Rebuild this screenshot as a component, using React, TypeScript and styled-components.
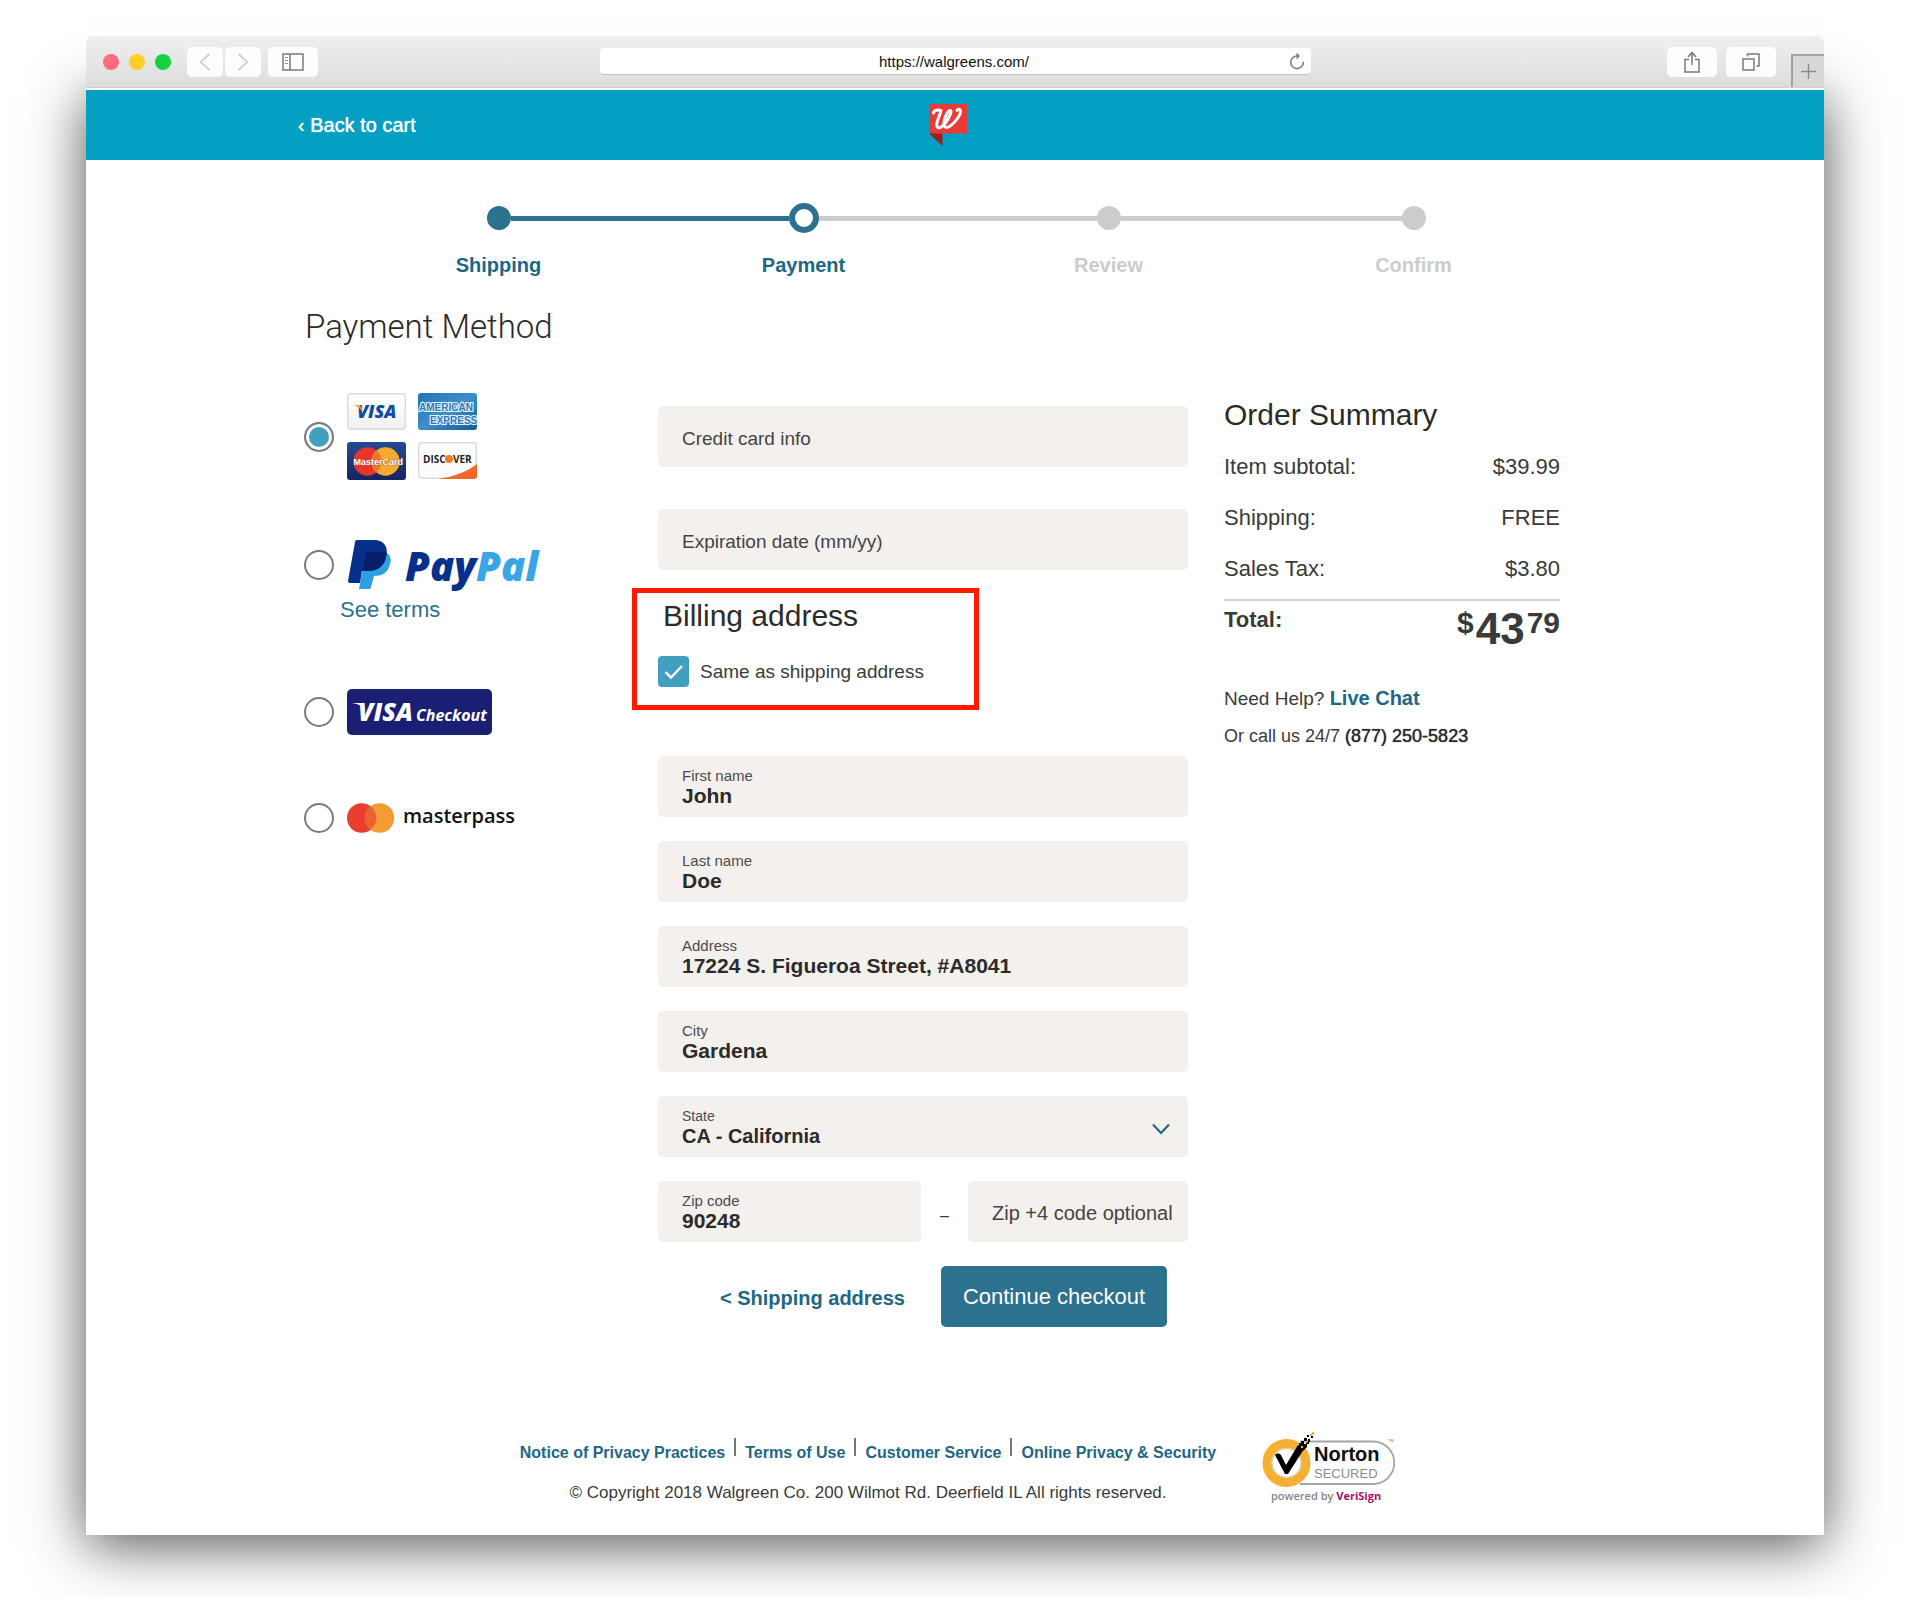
import React from "react";
import styled, { createGlobalStyle } from "styled-components";

const sans = '"Liberation Sans", Arial, Helvetica, sans-serif';
const color = {
  header: "#03a0c3",
  teal: "#2c728e",
  link: "#1d6786",
  accent: "#429fbf",
  ink: "#3a3a3a",
  dark: "#2b2b2b",
  field: "#f4f0ee",
  muted: "#cccccc",
  mark: "#ff1a00",
};

const GlobalStyle = createGlobalStyle`
  *, *::before, *::after { box-sizing: border-box; }
  body { margin: 0; background: #fff; color: ${color.ink}; font-family: ${sans}; }
  h1, h2, p, ul, ol, dl, dd, fieldset { margin: 0; padding: 0; border: 0; }
  ul, ol { list-style: none; }
  a { color: ${color.link}; text-decoration: none; }
  button, input, select { font-family: inherit; }
  svg { display: block; flex: none; overflow: visible; }
`;

const Desktop = styled.div`
  padding: 36px 96px 63px 86px;
  overflow: hidden;
`;

const Toolbar = styled.div`
  position: relative;
  z-index: 1;
  display: flex;
  align-items: center;
  height: 52px;
  border-radius: 6px 6px 0 0;
  border-bottom: 1px solid #cfcfcf;
  background: linear-gradient(#efefef, #dddddd);
`;

const ToolSide = styled.div<{ $end?: boolean }>`
  flex: 1 1 0;
  display: flex;
  align-items: center;
  align-self: stretch;
  justify-content: ${(p) => (p.$end ? "flex-end" : "flex-start")};
  gap: 7px;
  padding-left: 17px;
`;

const Lights = styled.div`
  display: flex;
  gap: 10px;
  margin-right: 9px;
`;

const Light = styled.span<{ $tone: string }>`
  width: 16px;
  height: 16px;
  border-radius: 50%;
  background: ${(p) => p.$tone};
`;

const ToolButton = styled.button<{ $wide?: boolean }>`
  display: flex;
  align-items: center;
  justify-content: center;
  width: ${(p) => (p.$wide ? 50 : 36)}px;
  height: 30px;
  padding: 0;
  border: 0;
  border-radius: 5px;
  background: #fdfdfd;
`;

const ToolGroup = styled.div<{ $gap: number }>`
  display: flex;
  gap: ${(p) => p.$gap}px;
`;

const AddressBar = styled.div`
  flex: 0 1 711px;
  display: flex;
  align-items: center;
  height: 27px;
  padding-right: 6px;
  border-radius: 4px;
  border-bottom: 1px solid #c4c4c4;
  background: #fff;
`;

const AddressInput = styled.input`
  flex: 1;
  min-width: 0;
  padding: 2px 0 0 20px;
  border: 0;
  background: none;
  color: #111;
  font-size: 15px;
  line-height: 24px;
  text-align: center;
`;

const BareButton = styled.button`
  padding: 0;
  border: 0;
  background: none;
`;

const NewTab = styled.button`
  align-self: flex-end;
  display: flex;
  align-items: center;
  justify-content: center;
  width: 33px;
  height: 33px;
  margin-left: 8px;
  padding: 0;
  border: solid #a2a2a2;
  border-width: 2px 0 0 2px;
  background: #d8d8d8;
`;

const Page = styled.div`
  padding-top: 2px;
  background: #fff;
  box-shadow: 0 10px 54px rgba(0, 0, 0, 0.68);
`;

const Header = styled.header`
  display: grid;
  grid-template-columns: 1fr auto 1fr;
  align-items: center;
  height: 70px;
  padding: 0 227px 0 212px;
  background: ${color.header};
`;

const BackLink = styled.a`
  color: #fff;
  font-size: 20px;
  line-height: 24px;
  text-shadow: 0 0 1px #fff;
`;

const Steps = styled.ol`
  display: grid;
  grid-template-columns: repeat(4, 1fr);
  max-width: 1222px;
  margin: 0 auto;
  padding: 43px 0 0 2px;
`;

type StepState = "done" | "current" | "todo";

const Step = styled.li<{ $state: StepState }>`
  display: grid;
  justify-items: center;
  gap: 20px;
  color: ${(p) => (p.$state === "todo" ? color.muted : color.link)};
  font-size: 20px;
  font-weight: 700;
  line-height: 24px;
`;

const Track = styled.div`
  display: flex;
  align-items: center;
  width: 100%;
  height: 30px;
`;

const Rail = styled.span<{ $tone: string }>`
  flex: 1;
  height: 5px;
  background: ${(p) => p.$tone};
`;

const Dot = styled.span<{ $state: StepState }>`
  width: ${(p) => (p.$state === "current" ? 30 : 24)}px;
  height: ${(p) => (p.$state === "current" ? 30 : 24)}px;
  border: ${(p) => (p.$state === "current" ? 6 : 0)}px solid ${color.teal};
  border-radius: 50%;
  background: ${(p) =>
    p.$state === "current" ? "#fff" : p.$state === "done" ? color.teal : color.muted};
`;

const Main = styled.main`
  padding: 0 264px 0 219px;
`;

const Title = styled.h1`
  margin-top: 30px;
  color: ${color.dark};
  font-family: Roboto, ${sans};
  font-size: 33px;
  font-weight: 300;
  line-height: 40px;
`;

const Columns = styled.div`
  display: grid;
  grid-template-columns: 353px minmax(400px, 1fr) 372px;
  align-items: start;
`;

const Methods = styled.fieldset`
  display: grid;
  gap: 60px;
  padding-top: 46px;
`;

const Method = styled.label`
  display: flex;
  align-items: center;
  gap: 14px;
  min-height: 46px;
`;

const Radio = styled.input`
  appearance: none;
  flex: none;
  width: 30px;
  height: 30px;
  margin: 0 -1px;
  border: 2px solid #7b7b7b;
  border-radius: 50%;
  background: #fff;
  &:checked {
    background: ${color.accent};
    box-shadow: inset 0 0 0 3px #fff;
  }
`;

const CardGrid = styled.span`
  display: grid;
  grid-template-columns: 59px 59px;
  gap: 12px;
`;

const TermsLink = styled.a`
  display: block;
  margin-left: 35px;
  padding-top: 2px;
  color: ${color.teal};
  font-size: 22px;
  line-height: 38px;
`;

const Form = styled.form`
  display: grid;
  padding-top: 59px;
`;

const CardFields = styled.div`
  display: grid;
  gap: 42px;
`;

const AddressFields = styled.div`
  display: grid;
  gap: 24px;
  margin-top: 46px;
`;

const PlainInput = styled.input<{ $size?: number }>`
  width: 100%;
  min-width: 0;
  height: 61px;
  padding: 4px 0 0 24px;
  border: 0;
  border-radius: 5px;
  background: ${color.field};
  color: ${color.ink};
  font-size: ${(p) => p.$size ?? 19}px;
  &::placeholder { color: #444; opacity: 1; }
`;

const Field = styled.label`
  display: grid;
  grid-template-columns: 1fr auto;
  grid-template-rows: 18px 22px;
  height: 61px;
  padding: 11px 18px 0 24px;
  border-radius: 5px;
  background: ${color.field};
`;

const FieldName = styled.span<{ $small?: boolean }>`
  color: #4c4c4c;
  font-size: ${(p) => (p.$small ? 14 : 15)}px;
  line-height: 18px;
`;

const FieldInput = styled.input`
  grid-column: 1;
  min-width: 0;
  height: 22px;
  padding: 0;
  border: 0;
  background: none;
  color: ${color.dark};
  font-size: 21px;
  font-weight: 700;
  line-height: 22px;
`;

const FieldSelect = styled(FieldInput).attrs({ as: "select" })`
  appearance: none;
  font-size: 20px;
`;

const Chevron = styled.svg`
  grid-area: 1 / 2 / 3 / 3;
  align-self: center;
  margin-top: 4px;
  pointer-events: none;
`;

const Billing = styled.section`
  width: 347px;
  margin: 18px 0 0 -26px;
  padding: 5px 0 18px 21px;
  border: 5px solid ${color.mark};
`;

const SectionTitle = styled.h2`
  color: ${color.dark};
  font-size: 30px;
  font-weight: 400;
  line-height: 36px;
`;

const BillingTitle = styled(SectionTitle)`
  padding-left: 5px;
`;

const CheckRow = styled.label`
  display: grid;
  grid-template-columns: 31px 1fr;
  align-items: center;
  column-gap: 11px;
  margin-top: 22px;
  font-size: 19px;
  line-height: 31px;
`;

const Checkbox = styled.input`
  appearance: none;
  grid-area: 1 / 1;
  width: 31px;
  height: 31px;
  margin: 0;
  border-radius: 4px;
  background: ${color.accent};
`;

const Tick = styled.svg`
  grid-area: 1 / 1;
  z-index: 1;
  justify-self: center;
  pointer-events: none;
`;

const ZipRow = styled.div`
  display: grid;
  grid-template-columns: 263px 1fr 220px;
`;

const ZipDash = styled.span`
  padding-top: 8px;
  line-height: 53px;
  text-align: center;
`;

const Actions = styled.div`
  display: flex;
  align-items: center;
  justify-content: flex-end;
  gap: 36px;
  padding-right: 21px;
  font-size: 20px;
  font-weight: 700;
  a { padding-top: 4px; }
`;

const Continue = styled.button`
  width: 226px;
  height: 61px;
  padding: 0;
  border: 0;
  border-radius: 5px;
  background: ${color.teal};
  color: #fff;
  font-size: 22px;
`;

const Summary = styled.aside`
  min-width: 0;
  padding: 50px 0 0 36px;
`;

const Lines = styled.dl`
  margin-top: 8px;
  padding-bottom: 5px;
  border-bottom: 2px solid #d2d2d2;
`;

const Line = styled.div`
  display: flex;
  justify-content: space-between;
  font-size: 22px;
  line-height: 51px;
`;

const Total = styled.div`
  display: flex;
  justify-content: space-between;
  align-items: flex-start;
  padding-top: 4px;
  font-size: 22px;
  font-weight: 700;
  line-height: 30px;
`;

const Price = styled.span`
  display: flex;
  gap: 2px;
  padding-top: 2px;
`;

const PricePart = styled.span<{ $big?: boolean }>`
  font-size: ${(p) => (p.$big ? 44 : 30)}px;
  line-height: ${(p) => (p.$big ? 44 : 32)}px;
`;

const Help = styled.p`
  margin-top: 35px;
  font-size: 19px;
  line-height: 24px;
  a { font-size: 20px; font-weight: 700; }
`;

const Call = styled.p`
  margin-top: 13px;
  font-size: 18px;
  line-height: 24px;
  a { color: ${color.dark}; text-shadow: 0 0 1px #2b2b2b; }
`;

const Footer = styled.footer`
  display: flex;
  justify-content: center;
  align-items: flex-start;
  gap: 46px;
  padding: 105px 0 30px 6px;
`;

const Legal = styled.div`
  padding-top: 6px;
  text-align: center;
`;

const LegalLinks = styled.ul`
  display: flex;
  font-size: 16px;
  font-weight: 700;
  line-height: 26px;
`;

const LegalItem = styled.li`
  display: flex;
  a { padding-top: 2px; }
  & + &::before {
    content: "";
    width: 2px;
    height: 18px;
    margin: 0 9px;
    background: #777;
  }
`;

const Copyright = styled.p`
  margin-top: 15px;
  font-size: 17px;
  line-height: 24px;
`;

const svgSans = { fontFamily: '"Open Sans", "Liberation Sans", sans-serif' };

const VisaCard = () => (
  <svg width="59" height="37" viewBox="0 0 59 37" role="img" aria-label="Visa">
    <defs>
      <linearGradient id="visaBg" x1="0" y1="0" x2="0" y2="1">
        <stop offset="0" stopColor="#fff" />
        <stop offset="1" stopColor="#f0f0f0" />
      </linearGradient>
    </defs>
    <rect x="0.7" y="0.7" width="57.6" height="35.6" rx="3" fill="url(#visaBg)" stroke="#dadada" strokeWidth="1.4" />
    <text x="10" y="25" fontSize="18" fontWeight="800" fontStyle="italic" fill="#0b4ea2" {...svgSans}>VISA</text>
    <path d="M7 12H13L16 20C14 16 11 14 7 12Z" fill="#f5a81c" />
  </svg>
);

const AmexCard = () => (
  <svg width="59" height="37" viewBox="0 0 59 37" role="img" aria-label="American Express">
    <defs>
      <linearGradient id="amexBg" x1="0" y1="0" x2="1" y2="1">
        <stop offset="0" stopColor="#2472b4" />
        <stop offset="0.5" stopColor="#3f8fca" />
        <stop offset="1" stopColor="#135a9f" />
      </linearGradient>
      <clipPath id="amexClip"><rect width="59" height="37" rx="3" /></clipPath>
    </defs>
    <g clipPath="url(#amexClip)">
      <rect width="59" height="37" fill="url(#amexBg)" />
      <g fill="#2a78b8" stroke="#e4f3fc" strokeWidth="2.2" paintOrder="stroke" fontSize="10" fontWeight="700" fontFamily='"Liberation Sans", sans-serif'>
        <text x="1" y="18">AMERICAN</text>
        <text x="12" y="31">EXPRESS</text>
      </g>
    </g>
  </svg>
);

const MasterCard = () => (
  <svg width="59" height="38" viewBox="0 0 59 38" role="img" aria-label="MasterCard">
    <defs>
      <linearGradient id="mcBg" x1="0" y1="0" x2="0" y2="1">
        <stop offset="0" stopColor="#244a94" />
        <stop offset="1" stopColor="#16245f" />
      </linearGradient>
    </defs>
    <rect width="59" height="38" rx="3" fill="url(#mcBg)" />
    <circle cx="20.5" cy="19.5" r="14.2" fill="#e8352c" />
    <circle cx="38.5" cy="19.5" r="14.2" fill="#f6ab2f" />
    <path d="M29.5 8.5A14.2 14.2 0 0 1 29.5 30.5A14.2 14.2 0 0 1 29.5 8.5Z" fill="#f0742c" />
    <text x="6.5" y="23" fontSize="9" fontWeight="700" fill="#fff" stroke="#9a4a3a" strokeWidth="0.7" paintOrder="stroke" fontFamily='"Liberation Sans", sans-serif'>MasterCard</text>
  </svg>
);

const DiscoverCard = () => (
  <svg width="59" height="37" viewBox="0 0 59 37" role="img" aria-label="Discover">
    <defs><clipPath id="discClip"><rect width="59" height="37" rx="3" /></clipPath></defs>
    <g clipPath="url(#discClip)">
      <rect x="0.7" y="0.7" width="57.6" height="35.6" rx="3" fill="#fcfcfc" stroke="#dadada" strokeWidth="1.4" />
      <path d="M59 22C49 30 34 35 20 37H59Z" fill="#f2682a" />
    </g>
    <g fontSize="10" fontWeight="700" fill="#1e1e1e" {...svgSans}>
      <text x="5" y="20.5">DISC</text>
      <text x="35" y="20.5">VER</text>
    </g>
    <circle cx="31" cy="17" r="4" fill="#f47b2a" />
  </svg>
);

const PayPalLogo = () => (
  <svg width="200" height="49" viewBox="0 0 200 49" role="img" aria-label="PayPal">
    <defs>
      <clipPath id="ppFront">
        <path d="M9 0H26C36 0 41 7 38 17C36 27 29 31 19 31H14L12 43H2Q0 43 0 41L7 2Q7 0 9 0Z" />
      </clipPath>
    </defs>
    <g transform="translate(1 0)">
      <path d="M18 12H37C42 14 44 19 42 24C40 33 34 36 26 36L23 47Q23 49 21 49H11Z" fill="#2f9fe3" />
      <path d="M9 0H26C36 0 41 7 38 17C36 27 29 31 19 31H14L12 43H2Q0 43 0 41L7 2Q7 0 9 0Z" fill="#06308c" />
      <path clipPath="url(#ppFront)" d="M18 12H37C42 14 44 19 42 24C40 33 34 36 26 36H14Z" fill="#061f6b" />
    </g>
    <text x="58" y="41" fontSize="40" fontWeight="800" fontStyle="italic" fill="#06308c" {...svgSans}>
      Pay<tspan fill="#3aa5e6">Pal</tspan>
    </text>
  </svg>
);

const VisaCheckout = () => (
  <svg width="145" height="46" viewBox="0 0 145 46" role="img" aria-label="Visa Checkout">
    <rect width="145" height="46" rx="5" fill="#1b1f74" />
    <g fill="#fff" fontStyle="italic" {...svgSans}>
      <text x="11" y="32" fontSize="25" fontWeight="800">VISA</text>
      <text x="69" y="32" fontSize="16" fontWeight="700">Checkout</text>
    </g>
    <path d="M5 14H15L19 22C16 17 12 15 5 14Z" fill="#fff" />
  </svg>
);

const Masterpass = () => (
  <svg width="175" height="30" viewBox="0 0 175 30" role="img" aria-label="Masterpass">
    <circle cx="14.7" cy="15" r="14.7" fill="#e93e30" />
    <circle cx="32.5" cy="15" r="14.7" fill="#f39c32" />
    <path d="M23.6 3.3A14.7 14.7 0 0 1 23.6 26.7A14.7 14.7 0 0 1 23.6 3.3Z" fill="#ea6232" />
    <text x="56" y="20" fontSize="20" fontWeight="600" fill="#111" {...svgSans}>masterpass</text>
  </svg>
);

const WalgreensLogo = () => (
  <svg width="38" height="42" viewBox="0 0 38 42" role="img" aria-label="Walgreens">
    <rect width="38" height="29.5" fill="#ea3a36" />
    <path d="M0 29.5H13.5V42Z" fill="#9c1f1a" />
    <path
      d="M4.5 9C5 6 9 5.500 12 6.500C11 12 6.500 18 8 22.500C9.500 26 15 22 18.500 16C21 11 23 7.500 21.500 6.500C19 6 15.500 13 15 18.500C14.800 23 17 24.500 20.500 22.500C26 19 31.500 11 31.500 7.500C31.500 5 29 4.500 28 6.500"
      fill="none" stroke="#fff" strokeWidth="3" strokeLinecap="round" strokeLinejoin="round"
    />
  </svg>
);

const NortonSeal = () => (
  <svg width="134" height="72" viewBox="0 0 134 72" role="img" aria-label="Norton Secured, powered by VeriSign">
    <path d="M38 9.500H111A21 21 0 0 1 111 52H38" fill="#fff" stroke="#a4a4a4" strokeWidth="1.800" />
    <circle cx="24.500" cy="31" r="19.500" fill="#fff" stroke="#f6b031" strokeWidth="9" />
    <circle cx="24.500" cy="31" r="14.500" fill="none" stroke="#bdb6a8" strokeWidth="0.800" />
    <path d="M13 23C15 21 18 21 19.500 24L24 33L36 13L42 17L26 42H23Z" fill="#000" />
    <path d="M35 14H37V11H39V9H42V12H45V15L43 17L41 19Z" fill="#000" />
    <g fill="#000">
      <rect x="42" y="6" width="3" height="3" /><rect x="46" y="7" width="2" height="3" />
      <rect x="45" y="3" width="2" height="2" /><rect x="49" y="4" width="2" height="2" />
      <rect x="44" y="10" width="3" height="2" />
    </g>
    <g fill="#f6b031">
      <rect x="39" y="14" width="2" height="2" /><rect x="43" y="9" width="2" height="2" />
      <rect x="48" y="2" width="2" height="2" /><rect x="50" y="0" width="2" height="3" />
    </g>
    <g fontFamily='"Liberation Sans", sans-serif'>
      <text x="52" y="29" fontSize="20" fontWeight="700" fill="#111">Norton</text>
      <text x="52" y="46" fontSize="13" fill="#8c8c8c">SECURED</text>
    </g>
    <g {...svgSans}>
      <text x="9" y="68" fontSize="11" fontWeight="600" fill="#858585">powered by <tspan fill="#a3116a" fontWeight="700">VeriSign</tspan></text>
      <text x="126" y="10" fontSize="4" fill="#777">TM</text>
    </g>
  </svg>
);

const steps: { name: string; state: StepState; before: string; after: string }[] = [
  { name: "Shipping", state: "done", before: "transparent", after: color.teal },
  { name: "Payment", state: "current", before: color.teal, after: color.muted },
  { name: "Review", state: "todo", before: color.muted, after: color.muted },
  { name: "Confirm", state: "todo", before: color.muted, after: "transparent" },
];

const addressFields = [
  ["First name", "John"],
  ["Last name", "Doe"],
  ["Address", "17224 S. Figueroa Street, #A8041"],
  ["City", "Gardena"],
];

const charges = [
  ["Item subtotal:", "$39.99"],
  ["Shipping:", "FREE"],
  ["Sales Tax:", "$3.80"],
];

const legal = ["Notice of Privacy Practices", "Terms of Use", "Customer Service", "Online Privacy & Security"];

const BrowserToolbar = () => (
  <Toolbar>
    <ToolSide>
      <Lights>
        <Light $tone="#ff6b81" />
        <Light $tone="#ffcf25" />
        <Light $tone="#0fd33f" />
      </Lights>
      <ToolGroup $gap={2}>
        <ToolButton type="button" aria-label="Back">
          <svg width="12" height="20" viewBox="0 0 12 20" fill="none" stroke="#d0d0d0" strokeWidth="1.800"><path d="M10.500 2L1.500 10L10.500 18" /></svg>
        </ToolButton>
        <ToolButton type="button" aria-label="Forward">
          <svg width="12" height="20" viewBox="0 0 12 20" fill="none" stroke="#d0d0d0" strokeWidth="1.800"><path d="M1.500 2L10.500 10L1.500 18" /></svg>
        </ToolButton>
      </ToolGroup>
      <ToolButton type="button" $wide aria-label="Sidebar">
        <svg width="22" height="18" viewBox="0 0 22 18" fill="none" stroke="#7a7a7a" strokeWidth="1.500">
          <path d="M1 1H21V17H1ZM8 1V17" />
          <path d="M3 4.500H6M3 7.500H6M3 10.500H6" strokeWidth="1.200" strokeDasharray="1.500 0.600" />
        </svg>
      </ToolButton>
    </ToolSide>
    <AddressBar>
      <AddressInput type="text" aria-label="Address" defaultValue="https://walgreens.com/" />
      <BareButton type="button" aria-label="Reload">
        <svg width="16" height="18" viewBox="0 0 16 18" fill="none" stroke="#808080" strokeWidth="1.600">
          <path d="M8.500 4A6.300 6.300 0 1 0 14.300 9.800" />
          <path d="M7.500 0.500L11 4L7.500 7.500Z" fill="#808080" stroke="none" />
        </svg>
      </BareButton>
    </AddressBar>
    <ToolSide $end>
      <ToolGroup $gap={9}>
        <ToolButton type="button" $wide aria-label="Share">
          <svg width="18" height="22" viewBox="0 0 18 22" fill="none" stroke="#7a7a7a" strokeWidth="1.500">
            <path d="M6 8.500H2V21H16V8.500H12M9 14V1.500M5 6L9 1.500L13 6" />
          </svg>
        </ToolButton>
        <ToolButton type="button" $wide aria-label="Tabs">
          <svg width="18" height="18" viewBox="0 0 18 18" fill="none" stroke="#7a7a7a" strokeWidth="1.500">
            <path d="M1 6H12V17H1ZM5.500 3.500V1H17V13H14.500" />
          </svg>
        </ToolButton>
      </ToolGroup>
      <NewTab type="button" aria-label="New tab">
        <svg width="15" height="15" viewBox="0 0 15 15" stroke="#8a8a8a" strokeWidth="1.400"><path d="M7.500 0V15M0 7.500H15" /></svg>
      </NewTab>
    </ToolSide>
  </Toolbar>
);

export default function App() {
  return (
    <>
      <GlobalStyle />
      <Desktop>
        <BrowserToolbar />
        <Page>
          <Header>
            <BackLink href="#cart">‹ Back to cart</BackLink>
            <WalgreensLogo />
          </Header>

          <Steps>
            {steps.map((s) => (
              <Step key={s.name} $state={s.state}>
                <Track>
                  <Rail $tone={s.before} />
                  <Dot $state={s.state} />
                  <Rail $tone={s.after} />
                </Track>
                {s.name}
              </Step>
            ))}
          </Steps>

          <Main>
            <Title>Payment Method</Title>
            <Columns>
              <Methods aria-label="Payment method">
                <Method>
                  <Radio type="radio" name="method" defaultChecked />
                  <CardGrid>
                    <VisaCard />
                    <AmexCard />
                    <MasterCard />
                    <DiscoverCard />
                  </CardGrid>
                </Method>
                <div>
                  <Method>
                    <Radio type="radio" name="method" />
                    <PayPalLogo />
                  </Method>
                  <TermsLink href="#terms">See terms</TermsLink>
                </div>
                <Method>
                  <Radio type="radio" name="method" />
                  <VisaCheckout />
                </Method>
                <Method>
                  <Radio type="radio" name="method" />
                  <Masterpass />
                </Method>
              </Methods>

              <Form onSubmit={(e) => e.preventDefault()}>
                <CardFields>
                  <PlainInput aria-label="Credit card info" placeholder="Credit card info" />
                  <PlainInput aria-label="Expiration date" placeholder="Expiration date (mm/yy)" />
                </CardFields>

                <Billing>
                  <BillingTitle>Billing address</BillingTitle>
                  <CheckRow>
                    <Checkbox type="checkbox" defaultChecked />
                    <Tick width="20" height="16" viewBox="0 0 20 16" fill="none" stroke="#fff" strokeWidth="2.400">
                      <path d="M1.500 8L7 13.500L18 2" />
                    </Tick>
                    Same as shipping address
                  </CheckRow>
                </Billing>

                <AddressFields>
                  {addressFields.map(([name, value]) => (
                    <Field key={name}>
                      <FieldName>{name}</FieldName>
                      <FieldInput type="text" defaultValue={value} />
                    </Field>
                  ))}
                  <Field>
                    <FieldName $small>State</FieldName>
                    <FieldSelect defaultValue="CA">
                      <option value="CA">CA - California</option>
                    </FieldSelect>
                    <Chevron width="18" height="12" viewBox="0 0 18 12" fill="none" stroke={color.link} strokeWidth="2.200">
                      <path d="M1 1.500L9 10L17 1.500" />
                    </Chevron>
                  </Field>
                  <ZipRow>
                    <Field>
                      <FieldName>Zip code</FieldName>
                      <FieldInput type="text" defaultValue="90248" />
                    </Field>
                    <ZipDash>–</ZipDash>
                    <PlainInput $size={20} aria-label="Zip +4 code" placeholder="Zip +4 code optional" />
                  </ZipRow>
                  <Actions>
                    <a href="#shipping">&lt; Shipping address</a>
                    <Continue type="submit">Continue checkout</Continue>
                  </Actions>
                </AddressFields>
              </Form>

              <Summary>
                <SectionTitle>Order Summary</SectionTitle>
                <Lines>
                  {charges.map(([name, value]) => (
                    <Line key={name}>
                      <dt>{name}</dt>
                      <dd>{value}</dd>
                    </Line>
                  ))}
                </Lines>
                <Total>
                  <span>Total:</span>
                  <Price>
                    <PricePart>$</PricePart>
                    <PricePart $big>43</PricePart>
                    <PricePart>79</PricePart>
                  </Price>
                </Total>
                <Help>
                  Need Help? <a href="#chat">Live Chat</a>
                </Help>
                <Call>
                  Or call us 24/7 <a href="tel:8772505823">(877) 250-5823</a>
                </Call>
              </Summary>
            </Columns>
          </Main>

          <Footer>
            <Legal>
              <LegalLinks>
                {legal.map((name) => (
                  <LegalItem key={name}>
                    <a href="#legal">{name}</a>
                  </LegalItem>
                ))}
              </LegalLinks>
              <Copyright>© Copyright 2018 Walgreen Co. 200 Wilmot Rd. Deerfield IL All rights reserved.</Copyright>
            </Legal>
            <NortonSeal />
          </Footer>
        </Page>
      </Desktop>
    </>
  );
}
